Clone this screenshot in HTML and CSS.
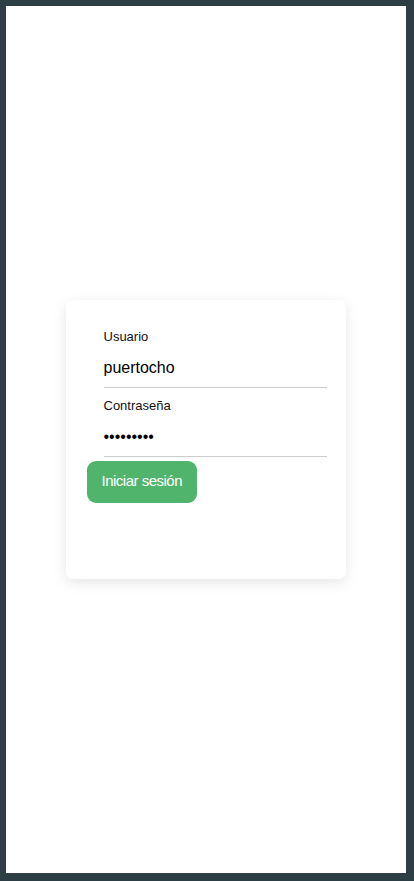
FILE: index.html
```html
<!DOCTYPE html>
<html lang="es">
<head>
<meta charset="utf-8">
<title>Login</title>
<link rel="stylesheet" href="styles.css">
</head>
<body>
<main class="screen">
  <form class="card">
    <div class="fields">
      <label class="label" for="user">Usuario</label>
      <input class="input" id="user" type="text" value="puertocho">
      <label class="label label-second" for="pass">Contraseña</label>
      <input class="input" id="pass" type="password" value="123456789">
    </div>
    <button class="btn" type="button">Iniciar sesión</button>
  </form>
</main>
</body>
</html>
```
FILE: styles.css
```css
html {
  background: #2e3e45;
}
body {
  margin: 6px;
  width: 400px;
  height: 867px;
  background: #ffffff;
  font-family: "Liberation Sans", Arial, sans-serif;
}
.screen {
  height: 100%;
  display: flex;
  align-items: center;
  justify-content: center;
}
.card {
  box-sizing: border-box;
  width: 280px;
  height: 279px;
  margin-left: -1px;
  padding: 29px 21px;
  background: #fff;
  border-radius: 7px;
  box-shadow: 0 4px 14px rgba(0, 0, 0, 0.1);
  display: flex;
  flex-direction: column;
  align-items: flex-start;
}
.fields {
  margin-left: 17px;
  width: 223px;
  display: flex;
  flex-direction: column;
}
.label {
  font-size: 13px;
  line-height: 16px;
  color: #111;
}
.label-second {
  margin-top: 10px;
}
.input {
  box-sizing: border-box;
  width: 223px;
  height: 37px;
  margin-top: 6px;
  padding: 0 0 2px;
  border: 0;
  border-bottom: 1px solid #cccccc;
  font-family: "Liberation Sans", Arial, sans-serif;
  font-size: 16px;
  color: #000;
  background: transparent;
  outline: none;
}
.btn {
  margin-top: 4px;
  height: 42px;
  padding: 0 15px 3px;
  border: 0;
  border-radius: 9px;
  background: #51b46d;
  color: #fff;
  font-family: "Liberation Sans", Arial, sans-serif;
  font-size: 15px;
  letter-spacing: -0.5px;
}
```
